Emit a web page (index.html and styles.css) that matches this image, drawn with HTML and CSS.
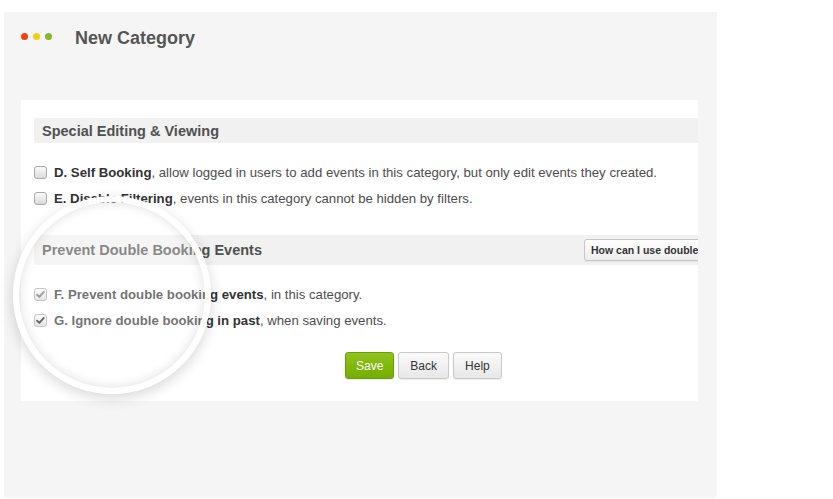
FILE: index.html
```html
<!DOCTYPE html>
<html lang="en">
<head>
<meta charset="utf-8">
<title>New Category</title>
<link rel="stylesheet" href="styles.css">
</head>
<body>
<div class="window">
  <div class="titlebar">
    <div class="dots">
      <span class="dot dot-red"></span>
      <span class="dot dot-yellow"></span>
      <span class="dot dot-green"></span>
    </div>
    <h1 class="title">New Category</h1>
  </div>

  <div class="panel">
    <div class="band">
      <h2 class="band-title">Special Editing &amp; Viewing</h2>
    </div>
    <ul class="opts">
      <li class="opt"><span class="cb"></span><span class="opt-text"><b>D. Self Booking</b>, allow logged in users to add events in this category, but only edit events they created.</span></li>
      <li class="opt"><span class="cb"></span><span class="opt-text"><b>E. Disable Filtering</b>, events in this category cannot be hidden by filters.</span></li>
    </ul>

    <div class="band band-tall">
      <h2 class="band-title band-title-wide">Prevent Double Booking Events</h2>
      <button class="help-btn" type="button">How can I use double booking?</button>
    </div>
    <ul class="opts">
      <li class="opt"><span class="cb cb-checked cb-dim"><svg viewBox="0 0 13 13" width="11" height="11"><path d="M2.5 6.8 L5.2 9.4 L10.4 3.4" /></svg></span><span class="opt-text"><b>F. Prevent double booking events</b>, in this category.</span></li>
      <li class="opt"><span class="cb cb-checked"><svg viewBox="0 0 13 13" width="11" height="11"><path d="M2.5 6.8 L5.2 9.4 L10.4 3.4" /></svg></span><span class="opt-text"><b>G. Ignore double booking in past</b>, when saving events.</span></li>
    </ul>

    <div class="actions">
      <button class="btn btn-save" type="button">Save</button>
      <button class="btn" type="button">Back</button>
      <button class="btn" type="button">Help</button>
    </div>
  </div>

  <div class="lens"></div>
</div>
</body>
</html>
```

FILE: styles.css
```css
html, body {
  margin: 0;
  padding: 0;
  background: #ffffff;
}

body {
  font-family: "Liberation Sans", Arial, sans-serif;
  font-size: 13.2px;
  color: #4d4d4d;
}

.window {
  position: relative;
  margin: 12px 0 0 4px;
  width: 713px;
  height: 486px;
  background: #f5f5f5;
  border-radius: 0 0 4px 4px;
}

.titlebar {
  display: flex;
  align-items: center;
  height: 48px;
  padding-left: 17px;
}

.dots {
  display: flex;
  gap: 5px;
}

.dot {
  width: 7px;
  height: 7px;
  border-radius: 50%;
}

.dot-red { background: #f2410f; }
.dot-yellow { background: #f7cf0c; }
.dot-green { background: #85b92c; }

.title {
  margin: 3px 0 0 23px;
  font-size: 18px;
  font-weight: bold;
  color: #555555;
  line-height: 22px;
}

.panel {
  margin: 40px 0 0 17px;
  width: 677px;
  height: 301px;
  box-sizing: border-box;
  padding: 18px 0 0 13px;
  background: #ffffff;
  overflow: hidden;
}

.band {
  display: flex;
  align-items: center;
  height: 25px;
  padding-left: 8px;
  background: #f1f1f1;
  border-radius: 2px 0 0 2px;
}

.band-tall {
  height: 30px;
  margin-top: 24px;
}

.band-title {
  margin: 0;
  font-size: 14.5px;
  font-weight: bold;
  color: #505050;
  line-height: 18px;
}

.band-title-wide {
  width: 542px;
  flex-shrink: 0;
}

.help-btn {
  flex-shrink: 0;
  height: 22px;
  padding: 0 6px;
  font-family: "Liberation Sans", Arial, sans-serif;
  font-size: 10.5px;
  font-weight: bold;
  color: #333333;
  white-space: nowrap;
  background: linear-gradient(#ffffff, #ececec);
  border: 1px solid #c6c6c6;
  border-radius: 3px;
  box-shadow: 0 1px 1px rgba(0, 0, 0, 0.06);
}

.opts {
  list-style: none;
  margin: 16px 0 0 0;
  padding: 0;
}

.opt {
  display: flex;
  align-items: center;
  height: 26px;
}

.opt-text {
  margin-left: 7px;
  white-space: nowrap;
}

.opt-text b {
  color: #333333;
}

.cb {
  display: flex;
  align-items: center;
  justify-content: center;
  width: 13px;
  height: 13px;
  box-sizing: border-box;
  border: 1px solid #a9a9a9;
  border-radius: 3px;
  background: linear-gradient(#fbfbfb, #dadada);
  flex-shrink: 0;
}

.cb svg path {
  fill: none;
  stroke: #1e1e1e;
  stroke-width: 2.2;
  stroke-linecap: round;
  stroke-linejoin: round;
}

.cb-dim svg path {
  stroke: #6e6e6e;
}

.actions {
  display: flex;
  gap: 4px;
  margin-top: 19px;
  padding-left: 311px;
}

.btn {
  height: 27px;
  padding: 0 11px;
  font-family: "Liberation Sans", Arial, sans-serif;
  font-size: 12px;
  color: #333333;
  background: linear-gradient(#fbfbfb, #e7e7e7);
  border: 1px solid #c9c9c9;
  border-radius: 3px;
  box-shadow: 0 1px 1px rgba(0, 0, 0, 0.08);
}

.btn-save {
  padding: 0 10px;
  color: #ffffff;
  background: linear-gradient(#8fc31c, #74ad00);
  border-color: #6c9d06;
}

.lens {
  position: absolute;
  left: 9px;
  top: 184px;
  width: 198px;
  height: 198px;
  box-sizing: border-box;
  border-radius: 50%;
  border: 6px solid rgba(255, 255, 255, 0.96);
  background: radial-gradient(circle at 50% 50%, rgba(255, 255, 255, 0.32) 0%, rgba(255, 255, 255, 0.32) 80%, rgba(225, 225, 225, 0.45) 100%);
  box-shadow: 0 4px 14px rgba(0, 0, 0, 0.16), inset 0 0 12px rgba(0, 0, 0, 0.13);
}
```
